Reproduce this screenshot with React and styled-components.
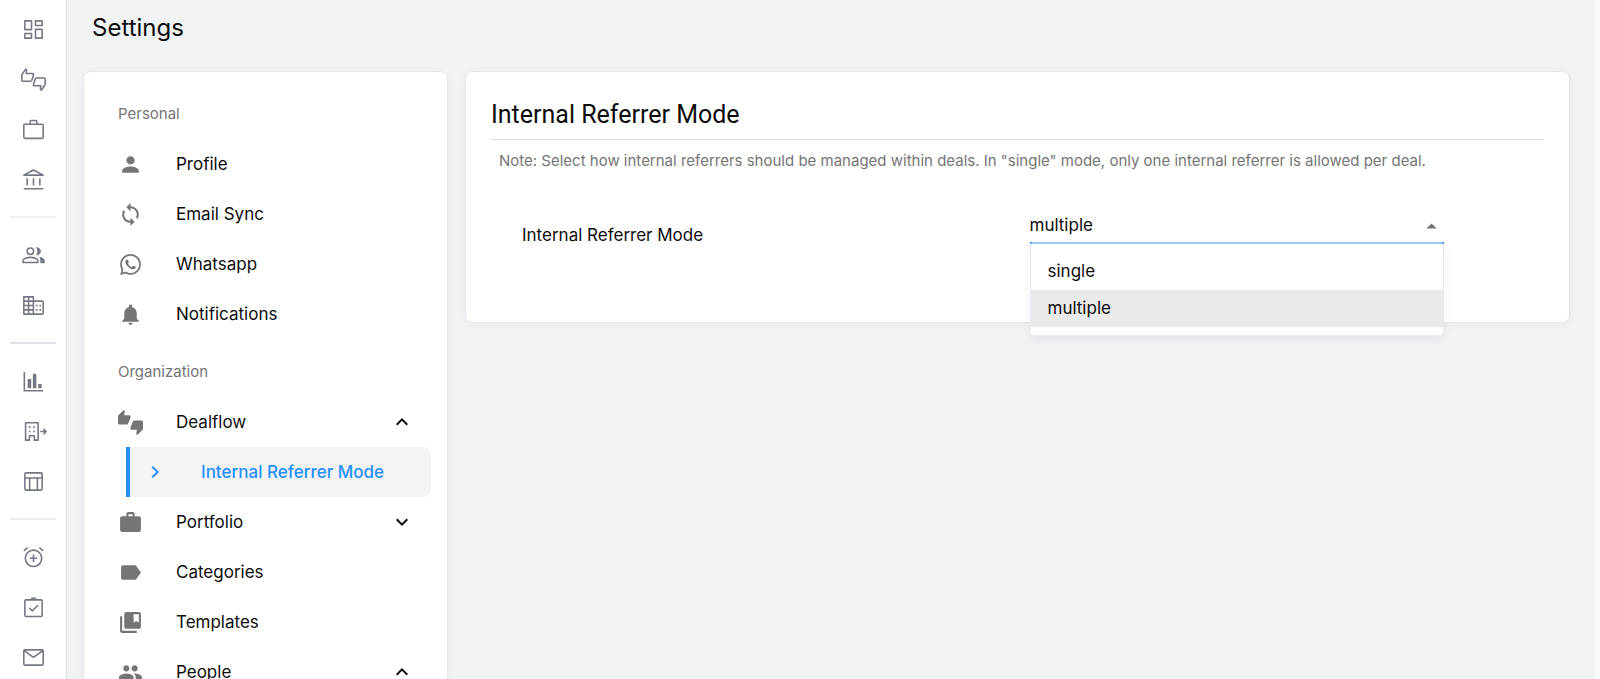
import React, { useState } from "react";
import styled, { createGlobalStyle, css } from "styled-components";
import {
  MdPerson,
  MdSync,
  MdWhatsapp,
  MdNotifications,
  MdThumbsUpDown,
  MdWork,
  MdLabel,
  MdCollectionsBookmark,
  MdPeople,
  MdExpandLess,
  MdExpandMore,
  MdChevronRight,
  MdArrowDropUp,
} from "react-icons/md";

const GlobalStyle = createGlobalStyle`
  *, *::before, *::after { box-sizing: border-box; }
  body {
    margin: 0;
    background: #f0f2f4;
    color: #0c0c0c;
    font-family: Inter, "Liberation Sans", sans-serif;
    font-size: 17px;
    line-height: 24px;
  }
`;

const Shell = styled.div`
  display: flex;
  height: 100vh;
  overflow: hidden;
`;

const Rail = styled.nav`
  flex: none;
  width: 67px;
  padding: 4px 10px;
  background: #fff;
  border-right: 1px solid #dfe1e5;
`;

const RailLink = styled.a`
  display: flex;
  align-items: center;
  justify-content: center;
  height: 50px;
  color: #747784;
`;

const RailDivider = styled.hr`
  height: 2px;
  margin: 12px 0;
  border: 0;
  background: ${(p) => p.$tone};
`;

const RailSvg = styled.svg`
  width: 25px;
  height: 25px;
  fill: none;
  stroke: currentColor;
  stroke-width: 1.5;
  stroke-linejoin: round;
`;

const Main = styled.main`
  flex: 1;
  min-width: 0;
  padding: 0 25px 0 16px;
  border-right: 5px solid #f9fafb;
`;

const PageTitle = styled.h1`
  margin: 0;
  padding: 12px 9px 27px;
  font-size: 24px;
  line-height: 32px;
  font-weight: 400;
`;

const Columns = styled.div`
  display: flex;
  align-items: flex-start;
  gap: 17px;
`;

const cardStyle = css`
  background: #fff;
  border: 1px solid #e6e7ec;
  border-radius: 8px;
  box-shadow: 0 2px 8px rgba(40, 50, 90, 0.04);
`;

const MenuCard = styled.aside`
  ${cardStyle}
  flex: none;
  width: 365px;
  padding: 17px 16px 40px;
`;

const MenuHeading = styled.h2`
  margin: 0;
  padding: 13px 18px;
  color: #757575;
  font-size: 15px;
  line-height: 24px;
  font-weight: 400;
`;

const MenuList = styled.ul`
  margin: 0 0 8px;
  padding: 0;
  list-style: none;
`;

const itemStyle = css`
  display: flex;
  align-items: center;
  width: 100%;
  height: 50px;
  padding: 0 17px 0 18px;
  border: 0;
  background: none;
  color: inherit;
  font: inherit;
  text-align: left;
  text-decoration: none;
  cursor: pointer;
`;

const MenuLink = styled.a`
  ${itemStyle}
`;

const MenuButton = styled.button`
  ${itemStyle}
`;

const MenuIcon = styled.span`
  display: flex;
  width: 58px;
  color: #757575;
  font-size: 25px;
`;

const MenuText = styled.span`
  flex: 1;
`;

const Caret = styled.span`
  display: flex;
  font-size: 24px;
`;

const SubLink = styled.a`
  display: flex;
  align-items: center;
  height: 50px;
  margin-left: 26px;
  padding-left: 13px;
  border-left: 4px solid #2490ff;
  border-radius: 0 8px 8px 0;
  background: #f4f4f4;
  color: #2490ff;
  font-weight: 500;
  text-decoration: none;
`;

const SubIcon = styled.span`
  display: flex;
  width: 58px;
  font-size: 24px;
`;

const DetailCard = styled.section`
  ${cardStyle}
  flex: 1;
  min-width: 0;
  min-height: 252px;
  padding: 27px 25px 24px;
`;

const DetailTitle = styled.h2`
  margin: 0;
  padding-bottom: 8px;
  border-bottom: 1px solid #e0e0e0;
  font-family: Roboto, "Liberation Sans", sans-serif;
  font-size: 25px;
  line-height: 32px;
  font-weight: 400;
`;

const Note = styled.p`
  margin: 9px 8px 0;
  color: #757575;
  font-size: 15px;
  line-height: 24px;
`;

const Field = styled.div`
  display: grid;
  grid-template-columns: 1fr 1fr;
  align-items: center;
  margin-top: 34px;
`;

const FieldLabel = styled.label`
  padding: 16px 0 0 31px;
`;

const SelectWrap = styled.div`
  position: relative;
  margin: 0 100px 0 12px;
`;

const Select = styled.select`
  appearance: none;
  display: block;
  width: 100%;
  height: 34px;
  padding: 0 24px 2px 0;
  border: 0;
  border-bottom: 2px solid #2490ff;
  border-radius: 0;
  background: none;
  color: inherit;
  font: inherit;
  outline: none;
`;

const SelectArrow = styled.span`
  position: absolute;
  top: 4px;
  right: 0;
  display: flex;
  color: #757575;
  font-size: 25px;
  pointer-events: none;
`;

const Options = styled.ul`
  position: absolute;
  top: 32px;
  left: 0;
  right: 0;
  margin: 0;
  padding: 9px 0 8px;
  list-style: none;
  background: #fff;
  border: 1px solid #e9eaf1;
  border-top: 2px solid #a3c8fb;
  border-radius: 4px;
  box-shadow: 0 4px 10px rgba(40, 50, 90, 0.06);
`;

const Option = styled.li`
  height: 37px;
  padding: 0 17px;
  line-height: 37px;
  background: ${(p) => (p.$selected ? "#eaeaea" : "transparent")};
  cursor: pointer;
`;

const railIcons = {
  Dashboard: (
    <path d="M3.7 3.7h6.4v8.4H3.7zM13.9 3.7h6.4v4.4h-6.4zM3.7 15.9h6.4v4.4H3.7zM13.9 11.9h6.4v8.4h-6.4z" />
  ),
  Deals: (
    <>
      <path d="M.8 7.400 4.400 2l1 .8-.4 3.400h6.100q1.200 0 .9 1.100l-1.600 5.400q-.3.900-1.200.9H1.800q-1 0-1-1z" />
      <path d="M23.200 16.800 19.600 22.200l-1-.8.4-3.400h-6.100q-1.200 0-.9-1.100l1.600-5.400q.3-.9 1.200-.9h7.400q1 0 1 1z" />
    </>
  ),
  Portfolio: (
    <path d="M3.7 6.9h16.6q1 0 1 1v11.6q0 1-1 1H3.7q-1 0-1-1V7.9q0-1 1-1zM8.8 6.9V4.3q0-1 1-1h4.4q1 0 1 1v2.6" />
  ),
  Funds: (
    <path d="M2.7 7.8 12 2.9l9.3 4.9zM5.9 10.7v7M12 10.7v7M18.1 10.7v7M2.6 20.9h18.8" />
  ),
  Contacts: (
    <>
      <circle cx="9" cy="7.9" r="3.1" />
      <path d="M1.9 18.7v-1.6c0-2 4-3.3 7.1-3.3s7.1 1.3 7.1 3.3v1.6z" />
      <path
        d="M14.4 4.2a3.8 3.8 0 1 1 0 7.4c1.7-1.8 1.7-5.6 0-7.4zM17.6 13.3c2.7.5 5.2 1.9 5.2 3.7v2.4h-4.2V17c0-1.5-.4-2.7-1-3.7z"
        fill="currentColor"
        stroke="none"
      />
    </>
  ),
  Companies: (
    <>
      <path d="M2.7 3.7h9.2v16.6H2.7zM7.3 3.7v16.6M2.7 7.8h9.2M2.7 12h9.2M2.7 16.2h9.2M11.9 7.8h8.4q1 0 1 1v10.5q0 1-1 1h-8.4" />
      <path d="M14.2 12h1.7M14.2 16.2h1.7M17.7 12h1.7M17.7 16.2h1.7" />
    </>
  ),
  Reports: (
    <>
      <path d="M3.2 2.8v18.1h18" />
      <path
        d="M6.4 9.7h3.4v8.8H6.4zM11.4 4.5h3.3v14h-3.3zM16.5 14.4h3.3v4.1h-3.3z"
        fill="currentColor"
        stroke="none"
      />
    </>
  ),
  Exits: (
    <>
      <path d="M4.4 3.6h12v16.7h-3.6v-4.2H8v4.2H4.4z" />
      <path d="M7.5 7.8h1.6M11.7 7.8h1.6M7.5 12h1.6M11.7 12h1.6M18.6 12h5.2M21.6 9.5l2.5 2.5-2.5 2.5" />
    </>
  ),
  Boards: (
    <path d="M4.7 3.7h14.6q1 0 1 1v14.6q0 1-1 1H4.7q-1 0-1-1V4.7q0-1 1-1zM3.7 8.7h16.6M8.3 8.7v11.6M15.7 8.7v11.6" />
  ),
  Reminders: (
    <>
      <circle cx="12" cy="12.8" r="7.9" />
      <path d="M12 9.2v7.2M8.4 12.8h7.2M2.7 5.6l3.6-3M21.3 5.6l-3.6-3" />
    </>
  ),
  Tasks: (
    <>
      <path d="M4.7 4.7h14.6q1 0 1 1v13.9q0 1-1 1H4.7q-1 0-1-1V5.7q0-1 1-1z" />
      <path d="M9.7 4.5q.2-1.7 2.3-1.7t2.3 1.7M7.9 12.3l2.9 3 5.4-5.4" />
    </>
  ),
  Mail: (
    <path d="M3.7 4.7h16.6q1 0 1 1v12.6q0 1-1 1H3.7q-1 0-1-1V5.7q0-1 1-1zM3 5.3l9 6.5 9-6.5" />
  ),
};

const railGroups = [
  { names: ["Dashboard", "Deals", "Portfolio", "Funds"], tone: "#f0f0f1" },
  { names: ["Contacts", "Companies"], tone: "#dfe0e7" },
  { names: ["Reports", "Exits", "Boards"], tone: "#ebebed" },
  { names: ["Reminders", "Tasks", "Mail"] },
];

const personal = [
  ["Profile", MdPerson],
  ["Email Sync", MdSync],
  ["Whatsapp", MdWhatsapp],
  ["Notifications", MdNotifications],
];

const organization = [
  { text: "Dealflow", Icon: MdThumbsUpDown, open: true, child: "Internal Referrer Mode" },
  { text: "Portfolio", Icon: MdWork, open: false },
  { text: "Categories", Icon: MdLabel },
  { text: "Templates", Icon: MdCollectionsBookmark },
  { text: "People", Icon: MdPeople, open: true },
];

function SideRail() {
  return (
    <Rail aria-label="Main">
      {railGroups.map((group) => (
        <React.Fragment key={group.names[0]}>
          {group.names.map((name) => (
            <RailLink key={name} href="#" aria-label={name}>
              <RailSvg viewBox="0 0 24 24" overflow="visible" aria-hidden="true">
                {railIcons[name]}
              </RailSvg>
            </RailLink>
          ))}
          {group.tone && <RailDivider $tone={group.tone} />}
        </React.Fragment>
      ))}
    </Rail>
  );
}

function SettingsMenu() {
  return (
    <MenuCard>
      <MenuHeading>Personal</MenuHeading>
      <MenuList>
        {personal.map(([text, Icon]) => (
          <li key={text}>
            <MenuLink href="#">
              <MenuIcon><Icon /></MenuIcon>
              <MenuText>{text}</MenuText>
            </MenuLink>
          </li>
        ))}
      </MenuList>
      <MenuHeading>Organization</MenuHeading>
      <MenuList>
        {organization.map(({ text, Icon, open, child }) => (
          <li key={text}>
            {open === undefined ? (
              <MenuLink href="#">
                <MenuIcon><Icon /></MenuIcon>
                <MenuText>{text}</MenuText>
              </MenuLink>
            ) : (
              <MenuButton type="button" aria-expanded={open}>
                <MenuIcon><Icon /></MenuIcon>
                <MenuText>{text}</MenuText>
                <Caret>{open ? <MdExpandLess /> : <MdExpandMore />}</Caret>
              </MenuButton>
            )}
            {child && (
              <SubLink href="#" aria-current="page">
                <SubIcon><MdChevronRight /></SubIcon>
                {child}
              </SubLink>
            )}
          </li>
        ))}
      </MenuList>
    </MenuCard>
  );
}

function ReferrerMode() {
  const [mode, setMode] = useState("multiple");
  const modes = ["single", "multiple"];
  return (
    <DetailCard>
      <DetailTitle>Internal Referrer Mode</DetailTitle>
      <Note>
        Note: Select how internal referrers should be managed within deals. In "single" mode, only
        one internal referrer is allowed per deal.
      </Note>
      <Field>
        <FieldLabel htmlFor="mode">Internal Referrer Mode</FieldLabel>
        <SelectWrap>
          <Select id="mode" value={mode} onChange={(e) => setMode(e.target.value)}>
            {modes.map((m) => (
              <option key={m} value={m}>{m}</option>
            ))}
          </Select>
          <SelectArrow><MdArrowDropUp /></SelectArrow>
          <Options role="listbox" aria-label="Internal Referrer Mode">
            {modes.map((m) => (
              <Option
                key={m}
                role="option"
                aria-selected={m === mode}
                $selected={m === mode}
                onClick={() => setMode(m)}
              >
                {m}
              </Option>
            ))}
          </Options>
        </SelectWrap>
      </Field>
    </DetailCard>
  );
}

export default function App() {
  return (
    <>
      <GlobalStyle />
      <Shell>
        <SideRail />
        <Main>
          <PageTitle>Settings</PageTitle>
          <Columns>
            <SettingsMenu />
            <ReferrerMode />
          </Columns>
        </Main>
      </Shell>
    </>
  );
}
